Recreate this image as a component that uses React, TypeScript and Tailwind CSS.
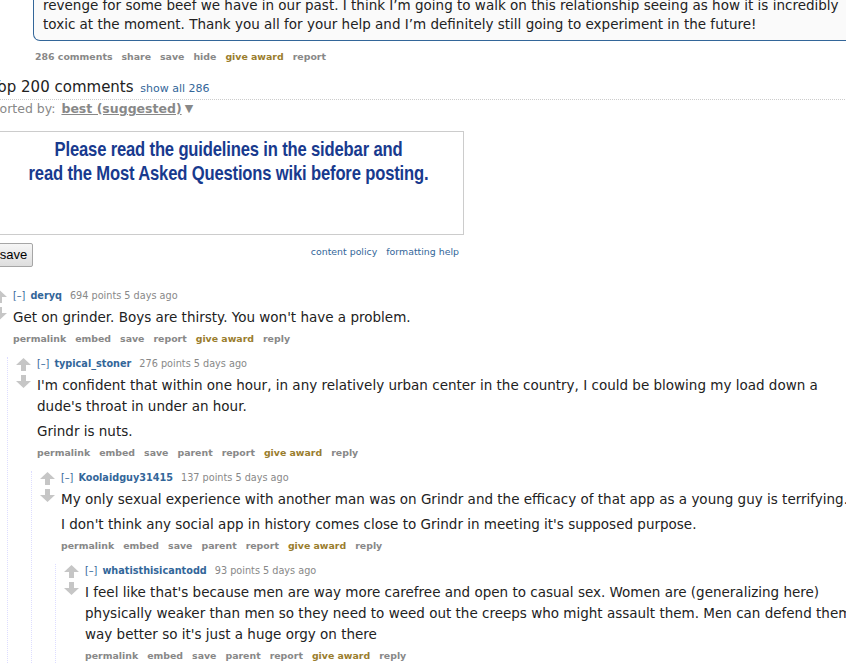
import React from "react";

type CommentData = {
  author: string;
  points: number;
  paragraphs: string[][];
  parent?: boolean;
  reply?: CommentData;
};

const thread: CommentData = {
  author: "deryq",
  points: 694,
  paragraphs: [["Get on grinder. Boys are thirsty. You won't have a problem."]],
  reply: {
    author: "typical_stoner",
    points: 276,
    parent: true,
    paragraphs: [
      [
        "I'm confident that within one hour, in any relatively urban center in the country, I could be blowing my load down a",
        "dude's throat in under an hour.",
      ],
      ["Grindr is nuts."],
    ],
    reply: {
      author: "Koolaidguy31415",
      points: 137,
      parent: true,
      paragraphs: [
        [
          "My only sexual experience with another man was on Grindr and the efficacy of that app as a young guy is terrifying.",
        ],
        [
          "I don't think any social app in history comes close to Grindr in meeting it's supposed purpose.",
        ],
      ],
      reply: {
        author: "whatisthisicantodd",
        points: 93,
        parent: true,
        paragraphs: [
          [
            "I feel like that's because men are way more carefree and open to casual sex. Women are (generalizing here)",
            "physically weaker than men so they need to weed out the creeps who might assault them. Men can defend themselves",
            "way better so it's just a huge orgy on there",
          ],
        ],
      },
    },
  },
};

function Arrow({ down }: { down?: boolean }) {
  return (
    <svg width="15" height="13" viewBox="0 0 15 13" className={down ? "rotate-180" : ""}>
      <polygon points="7.5,0 15,7 10,7 10,13 5,13 5,7 0,7" fill="#c6c6c6" />
    </svg>
  );
}

/** Bold grey link row under a post or comment. */
function FlatList({ items }: { items: string[] }) {
  return (
    <ul className="flex gap-[9px] whitespace-nowrap text-[9.4px] font-bold leading-[14px] text-[#888]">
      {items.map((item) => (
        <li key={item} className={item === "give award" ? "text-[#9a7d2d]" : ""}>
          {item}
        </li>
      ))}
    </ul>
  );
}

function Comment({ data }: { data: CommentData }) {
  const buttons = data.parent
    ? ["permalink", "embed", "save", "parent", "report", "give award", "reply"]
    : ["permalink", "embed", "save", "report", "give award", "reply"];
  return (
    <div>
      <div className="flex">
        <div className="mr-[6px] flex w-[15px] shrink-0 flex-col gap-[4px] pt-[1px]">
          <Arrow />
          <Arrow down />
        </div>
        <div className="min-w-0">
          <p className="whitespace-nowrap text-[9.7px] leading-[14px] text-[#888]">
            <span className="text-[#369]">[–]</span>
            <span className="ml-[5px] font-bold text-[#369]">{data.author}</span>
            <span className="ml-[8px]">{data.points} points 5 days ago</span>
          </p>
          <div className="mt-[4px] text-[13.5px] leading-[21px] text-[#222]">
            {data.paragraphs.map((lines, i) => (
              <p key={i} className="mb-[4px]">
                {lines.map((line) => (
                  <span key={line} className="block whitespace-nowrap">
                    {line}
                  </span>
                ))}
              </p>
            ))}
          </div>
          <div className="mt-[3px]">
            <FlatList items={buttons} />
          </div>
        </div>
      </div>
      {data.reply && (
        <div className="ml-[15px] mt-[11px] border-l border-dotted border-[#ddf] pl-[8px]">
          <Comment data={data.reply} />
        </div>
      )}
    </div>
  );
}

export default function App() {
  return (
    <div className="relative h-[672px] w-[846px] overflow-hidden bg-white font-['DejaVu_Sans',Verdana,sans-serif] text-[#222]">
      {/* self text, scrolled so only its last lines show */}
      <div className="-mt-[4px] ml-[33px] w-[900px] rounded-b-[7px] border border-t-0 border-[#369] bg-[#fafafa] px-[9px] pb-[6px] text-[13.5px] leading-[19px]">
        <span className="block whitespace-nowrap">
          revenge for some beef we have in our past. I think I’m going to walk on this relationship seeing as how it is incredibly
        </span>
        <span className="block whitespace-nowrap">
          toxic at the moment. Thank you all for your help and I’m definitely still going to experiment in the future!
        </span>
      </div>

      <div className="ml-[35px] mt-[9px]">
        <FlatList items={["286 comments", "share", "save", "hide", "give award", "report"]} />
      </div>

      <div className="-ml-[9px] mt-[13px] w-[900px] border-b border-dotted border-[#ccc]">
        <h2 className="whitespace-nowrap text-[15px] leading-[20px]">
          Top 200 comments <span className="ml-[2px] text-[11px] text-[#369]">show all 286</span>
        </h2>
      </div>

      <div className="-ml-[7px] mt-[2px] flex items-center whitespace-nowrap text-[12.5px] leading-[14px] text-[#888]">
        sorted by:
        <span className="ml-[6px] font-bold underline">best (suggested)</span>
        <span className="ml-[3px] text-[11px]">▼</span>
      </div>

      <div className="-ml-[7px] mt-[15px] w-[471px]">
        <div className="h-[104px] overflow-hidden border border-[#ccc] bg-white pt-[5px] text-center font-['Liberation_Sans',Arial,sans-serif] text-[21px] font-bold leading-[24px] tracking-[-0.2px] text-[#183a8e]">
          <p className="-mx-[60px] scale-x-[0.79] whitespace-nowrap">Please read the guidelines in the sidebar and</p>
          <p className="-mx-[60px] scale-x-[0.79] whitespace-nowrap">read the Most Asked Questions wiki before posting.</p>
        </div>
        <div className="mt-[8px] flex items-start justify-between pr-[5px]">
          <button className="-ml-[1px] h-[24px] w-[41px] rounded-[2px] border border-[#a6a6a6] bg-gradient-to-b from-[#f6f6f6] to-[#dedede] pl-[2px] font-['Liberation_Sans',Arial,sans-serif] text-[13px] text-black">
            save
          </button>
          <div className="flex gap-[9px] pt-[2px] text-[9.4px] leading-[14px] text-[#369]">
            <span>content policy</span>
            <span>formatting help</span>
          </div>
        </div>
      </div>

      <div className="-ml-[8px] mt-[22px]">
        <Comment data={thread} />
      </div>
    </div>
  );
}
